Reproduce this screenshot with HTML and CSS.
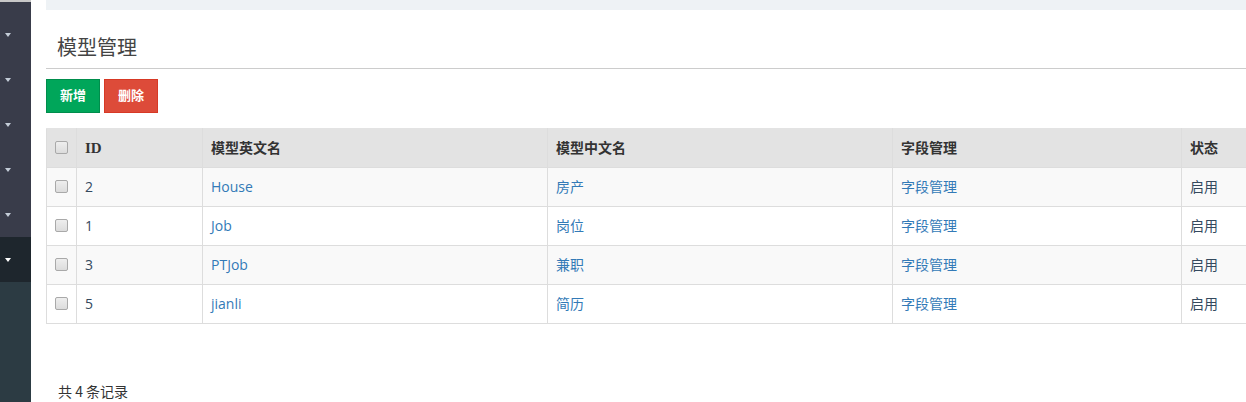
FILE: index.html
```html
<!DOCTYPE html>
<html lang="zh-CN">
<head>
    <meta charset="UTF-8">
    <title>模型管理</title>
    <link rel="stylesheet" href="styles.css">
</head>
<body>
    <aside class="sidebar">
        <div class="nav-item"><span class="caret"></span></div>
        <div class="nav-item"><span class="caret"></span></div>
        <div class="nav-item"><span class="caret"></span></div>
        <div class="nav-item"><span class="caret"></span></div>
        <div class="nav-item"><span class="caret"></span></div>
        <div class="nav-item active"><span class="caret"></span></div>
    </aside>

    <main class="main">
        <div class="top-bar"></div>

        <h2 class="page-title">模型管理</h2>

        <div class="toolbar">
            <button class="btn btn-green">新增</button>
            <button class="btn btn-red">删除</button>
        </div>

        <table class="data-table">
            <thead>
                <tr>
                    <th class="col-check"><span class="check"></span></th>
                    <th class="col-id"><span class="latin">ID</span></th>
                    <th class="col-en">模型英文名</th>
                    <th class="col-cn">模型中文名</th>
                    <th class="col-field">字段管理</th>
                    <th>状态</th>
                </tr>
            </thead>
            <tbody>
                <tr>
                    <td class="col-check"><span class="check"></span></td>
                    <td>2</td>
                    <td><a href="#">House</a></td>
                    <td><a href="#">房产</a></td>
                    <td><a href="#">字段管理</a></td>
                    <td>启用</td>
                </tr>
                <tr>
                    <td class="col-check"><span class="check"></span></td>
                    <td>1</td>
                    <td><a href="#">Job</a></td>
                    <td><a href="#">岗位</a></td>
                    <td><a href="#">字段管理</a></td>
                    <td>启用</td>
                </tr>
                <tr>
                    <td class="col-check"><span class="check"></span></td>
                    <td>3</td>
                    <td><a href="#">PTJob</a></td>
                    <td><a href="#">兼职</a></td>
                    <td><a href="#">字段管理</a></td>
                    <td>启用</td>
                </tr>
                <tr>
                    <td class="col-check"><span class="check"></span></td>
                    <td>5</td>
                    <td><a href="#">jianli</a></td>
                    <td><a href="#">简历</a></td>
                    <td><a href="#">字段管理</a></td>
                    <td>启用</td>
                </tr>
            </tbody>
        </table>

        <div class="summary">共 4 条记录</div>
    </main>
</body>
</html>
```

FILE: styles.css
```css
* {
    margin: 0;
    padding: 0;
    box-sizing: border-box;
}

body {
    display: flex;
    height: 402px;
    overflow: hidden;
    background: #fff;
    font-family: "Open Sans", "Noto Sans CJK SC", sans-serif;
    font-size: 14px;
    color: #333;
}

/* sidebar */
.sidebar {
    width: 31px;
    flex-shrink: 0;
    background: #2c3b43;
}

.sidebar::before {
    content: "";
    display: block;
    height: 10px;
    background: #393c4a;
    border-top: 2px solid #c8c8c8;
}

.nav-item {
    height: 45px;
    background: #393c4a;
    display: flex;
    align-items: center;
    padding-left: 5px;
}

.nav-item.active {
    background: #1e262d;
}

.caret {
    width: 0;
    height: 0;
    border-left: 3px solid transparent;
    border-right: 3px solid transparent;
    border-top: 4px solid #c4cdd8;
}

.nav-item.active .caret {
    border-top-color: #fff;
}

/* main */
.main {
    flex: 1;
    margin-left: 15px;
    min-width: 0;
}

.top-bar {
    height: 10px;
    background: #eef2f5;
}

.page-title {
    font-size: 20px;
    font-weight: normal;
    line-height: 22px;
    color: #444;
    margin-top: 27px;
    padding: 0 0 9px 11px;
    border-bottom: 1px solid #ccc;
}

.toolbar {
    display: flex;
    gap: 4px;
    margin-top: 10px;
}

.btn {
    height: 34px;
    width: 54px;
    padding-bottom: 3px;
    border: 1px solid;
    color: #fff;
    font-family: "Noto Sans CJK SC", sans-serif;
    font-size: 13px;
    font-weight: bold;
    cursor: pointer;
}

.btn-green {
    background: #00a65a;
    border-color: #008d4c;
}

.btn-red {
    background: #dd4b39;
    border-color: #d73925;
}

/* table */
.data-table {
    margin-top: 15px;
    width: 1260px;
    border-collapse: collapse;
    table-layout: fixed;
}

.data-table th,
.data-table td {
    height: 39px;
    border: 1px solid #ddd;
    padding: 0 8px 2px;
    text-align: left;
    vertical-align: middle;
    white-space: nowrap;
}

.data-table thead tr {
    background: #e3e3e3;
}

.data-table th {
    font-weight: bold;
    color: #333;
    border-bottom-width: 0;
    border-top-color: #e3e3e3;
}

.data-table tbody tr:nth-child(odd) {
    background: #f9f9f9;
}

.data-table td {
    color: #34495e;
}

.data-table a {
    color: #337ab7;
    text-decoration: none;
}

.col-check { width: 30px; }
.col-id { width: 126px; }
.col-en { width: 345px; }
.col-cn { width: 345px; }
.col-field { width: 289px; }

.latin {
    font-family: "Liberation Serif", serif;
    font-size: 15px;
}

.check {
    display: block;
    width: 13px;
    height: 13px;
    border: 1px solid #a9a9a9;
    border-radius: 2px;
    background: linear-gradient(#eee, #dcdcdc);
}

.summary {
    margin-top: 57px;
    padding-left: 12px;
    line-height: 20px;
    font-family: "Noto Sans CJK SC", sans-serif;
    color: #333;
}
```
